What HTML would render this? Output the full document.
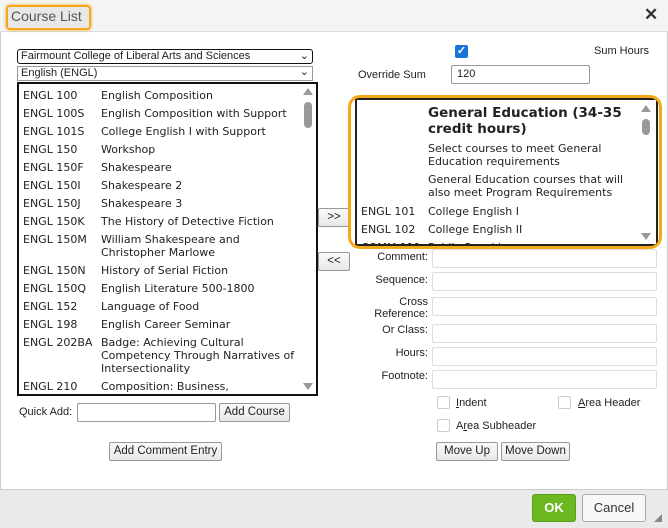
<!DOCTYPE html>
<html><head><meta charset="utf-8"><style>
*{box-sizing:border-box;margin:0;padding:0}
body{width:668px;height:528px;position:relative;background:#fff;font-family:"Liberation Sans",Arial,sans-serif;font-size:11px;color:#222;overflow:hidden}
.a{position:absolute}
.v{font-family:"DejaVu Sans",Verdana,sans-serif;font-size:11px;color:#222}
.row{position:absolute;left:4px;line-height:13px}
.row .c{position:absolute;left:0;white-space:nowrap}
.row .t{position:absolute;left:78px;width:198px}
.inp{position:absolute;border:1px solid #ddd;border-radius:2px;background:#fff}
.btn{position:absolute;border:1px solid #999;border-radius:2px;background:linear-gradient(#fafafa,#e8e8e8);font-size:11.5px;text-align:center;color:#222}
.lbl{position:absolute;text-align:right;width:80px;font-size:11px;color:#222}
.cb{position:absolute;width:13px;height:13px;border:1px solid #ccc;border-radius:2px;background:#fff}
</style></head><body>
<div class="a" style="left:0;top:0;width:668px;height:32px;background:#f4f4f4;border-bottom:1px solid #ddd"></div>
<div class="a" style="left:6px;top:5px;width:85px;height:25px;border:2px solid #f4a81a;border-radius:4px;box-shadow:0 0 3px #f4a81a;background:#e8e8e8"></div>
<div class="a" style="left:11px;top:8px;font-size:14px;color:#555">Course List</div>
<div class="a" style="left:644px;top:5px;font-size:17px;font-weight:bold;color:#333">✕</div>

<div class="a" style="left:17px;top:49px;width:296px;height:15px;border:1.5px solid #111;border-radius:3px;font-size:11px;line-height:12px;padding-left:3px">Fairmount College of Liberal Arts and Sciences<span class="a" style="right:3px;top:0">⌄</span></div>
<div class="a" style="left:17px;top:66px;width:296px;height:15px;border:1px solid #999;font-size:11px;line-height:13px;padding-left:3px">English (ENGL)<span class="a" style="right:3px;top:-1px">⌄</span></div>

<div class="a v" style="left:17px;top:82px;width:301px;height:314px;border:2px solid #111;overflow:hidden">
<div class="row" style="top:5px"><span class="c">ENGL 100</span><span class="t">English Composition</span></div>
<div class="row" style="top:23px"><span class="c">ENGL 100S</span><span class="t">English Composition with Support</span></div>
<div class="row" style="top:41px"><span class="c">ENGL 101S</span><span class="t">College English I with Support</span></div>
<div class="row" style="top:59px"><span class="c">ENGL 150</span><span class="t">Workshop</span></div>
<div class="row" style="top:77px"><span class="c">ENGL 150F</span><span class="t">Shakespeare</span></div>
<div class="row" style="top:95px"><span class="c">ENGL 150I</span><span class="t">Shakespeare 2</span></div>
<div class="row" style="top:113px"><span class="c">ENGL 150J</span><span class="t">Shakespeare 3</span></div>
<div class="row" style="top:131px"><span class="c">ENGL 150K</span><span class="t">The History of Detective Fiction</span></div>
<div class="row" style="top:149px"><span class="c">ENGL 150M</span><span class="t">William Shakespeare and<br>Christopher Marlowe</span></div>
<div class="row" style="top:180px"><span class="c">ENGL 150N</span><span class="t">History of Serial Fiction</span></div>
<div class="row" style="top:198px"><span class="c">ENGL 150Q</span><span class="t">English Literature 500-1800</span></div>
<div class="row" style="top:216px"><span class="c">ENGL 152</span><span class="t">Language of Food</span></div>
<div class="row" style="top:234px"><span class="c">ENGL 198</span><span class="t">English Career Seminar</span></div>
<div class="row" style="top:252px"><span class="c">ENGL 202BA</span><span class="t">Badge: Achieving Cultural<br>Competency Through Narratives of<br>Intersectionality</span></div>
<div class="row" style="top:296px"><span class="c">ENGL 210</span><span class="t">Composition: Business,<br>professional and technical writing</span></div>
<div class="a" style="right:3px;top:4px;width:0;height:0;border:5px solid transparent;border-bottom:7px solid #999;border-top:0"></div>
<div class="a" style="right:4px;top:18px;width:8px;height:26px;background:#999;border-radius:4px"></div>
<div class="a" style="right:3px;bottom:4px;width:0;height:0;border:5px solid transparent;border-top:7px solid #999;border-bottom:0"></div>
</div>

<div class="a" style="left:19px;top:406px;font-size:11px">Quick Add:</div>
<div class="inp" style="left:77px;top:403px;width:139px;height:19px;border-color:#999"></div>
<div class="btn" style="left:219px;top:403px;width:71px;height:19px;line-height:17px">Add Course</div>
<div class="btn" style="left:109px;top:442px;width:113px;height:19px;line-height:17px">Add Comment Entry</div>

<div class="btn" style="left:318px;top:208px;width:32px;height:19px;line-height:17px">&gt;&gt;</div>
<div class="btn" style="left:318px;top:252px;width:32px;height:19px;line-height:17px">&lt;&lt;</div>

<div class="a" style="left:455px;top:45px;width:13px;height:13px;background:#1a73d9;border-radius:2px;color:#fff;font-size:11px;line-height:13px;text-align:center;font-weight:bold">✓</div>
<div class="a" style="left:594px;top:45px;font-size:11px">Sum Hours</div>
<div class="a" style="left:358px;top:69px;font-size:11px">Override Sum</div>
<div class="inp" style="left:451px;top:65px;width:139px;height:19px;border-color:#999;padding:2px 5px;font-size:11px">120</div>

<div class="a v" style="left:355px;top:98px;width:303px;height:148px;border:2px solid #222;overflow:hidden;background:#fff">
<div class="a" style="left:71px;top:5px;width:215px;font-weight:bold;font-size:13.5px;line-height:16px">General Education (34-35 credit hours)</div>
<div class="a" style="left:71px;top:42px;width:215px;line-height:13px">Select courses to meet General Education requirements</div>
<div class="a" style="left:71px;top:73px;width:215px;line-height:13px">General Education courses that will also meet Program Requirements</div>
<div class="a" style="left:4px;top:105px">ENGL 101</div><div class="a" style="left:71px;top:105px">College English I</div>
<div class="a" style="left:4px;top:123px">ENGL 102</div><div class="a" style="left:71px;top:123px">College English II</div>
<div class="a" style="left:4px;top:141px">COMM 111</div><div class="a" style="left:71px;top:141px">Public Speaking</div>
<div class="a" style="right:5px;top:5px;width:0;height:0;border:5px solid transparent;border-bottom:7px solid #999;border-top:0"></div>
<div class="a" style="right:6px;top:19px;width:8px;height:16px;background:#999;border-radius:4px"></div>
<div class="a" style="right:5px;bottom:4px;width:0;height:0;border:5px solid transparent;border-top:7px solid #999;border-bottom:0"></div>
</div>
<div class="a" style="left:348px;top:95px;width:314px;height:154px;border:3px solid #f4a81a;border-radius:12px"></div>

<div class="lbl" style="left:348px;top:251px">Comment:</div>
<div class="inp" style="left:432px;top:249px;width:225px;height:19px"></div>
<div class="lbl" style="left:348px;top:274px">Sequence:</div>
<div class="inp" style="left:432px;top:272px;width:225px;height:19px"></div>
<div class="lbl" style="left:348px;top:296px;line-height:12px">Cross<br>Reference:</div>
<div class="inp" style="left:432px;top:297px;width:225px;height:19px"></div>
<div class="lbl" style="left:348px;top:324px">Or Class:</div>
<div class="inp" style="left:432px;top:324px;width:225px;height:19px"></div>
<div class="lbl" style="left:348px;top:347px">Hours:</div>
<div class="inp" style="left:432px;top:347px;width:225px;height:19px"></div>
<div class="lbl" style="left:348px;top:370px">Footnote:</div>
<div class="inp" style="left:432px;top:370px;width:225px;height:19px"></div>

<div class="cb" style="left:437px;top:396px"></div>
<div class="a" style="left:456px;top:397px"><u>I</u>ndent</div>
<div class="cb" style="left:558px;top:396px"></div>
<div class="a" style="left:578px;top:397px"><u>A</u>rea Header</div>
<div class="cb" style="left:437px;top:419px"></div>
<div class="a" style="left:456px;top:420px">A<u>r</u>ea Subheader</div>
<div class="btn" style="left:436px;top:442px;width:62px;height:19px;line-height:17px">Move Up</div>
<div class="btn" style="left:501px;top:442px;width:69px;height:19px;line-height:17px">Move Down</div>

<div class="a" style="left:0;top:489px;width:668px;height:39px;background:#eaeaea;border-top:1px solid #ccc"></div>
<div class="a" style="left:532px;top:494px;width:44px;height:28px;background:#6cb820;border:1px solid #5a9e18;border-radius:3px;color:#fff;font-weight:bold;font-size:13px;text-align:center;line-height:26px">OK</div>
<div class="a" style="left:582px;top:494px;width:64px;height:28px;background:#f7f7f7;border:1px solid #aaa;border-radius:3px;font-size:13px;text-align:center;line-height:26px;color:#333">Cancel</div>
<div class="a" style="left:654px;top:514px;width:0;height:0;border-left:8px solid transparent;border-bottom:8px solid #888"></div>
<div class="a" style="left:0;top:32px;width:1px;height:458px;background:#ccc"></div>
<div class="a" style="left:667px;top:32px;width:1px;height:458px;background:#ccc"></div>
</body></html>
